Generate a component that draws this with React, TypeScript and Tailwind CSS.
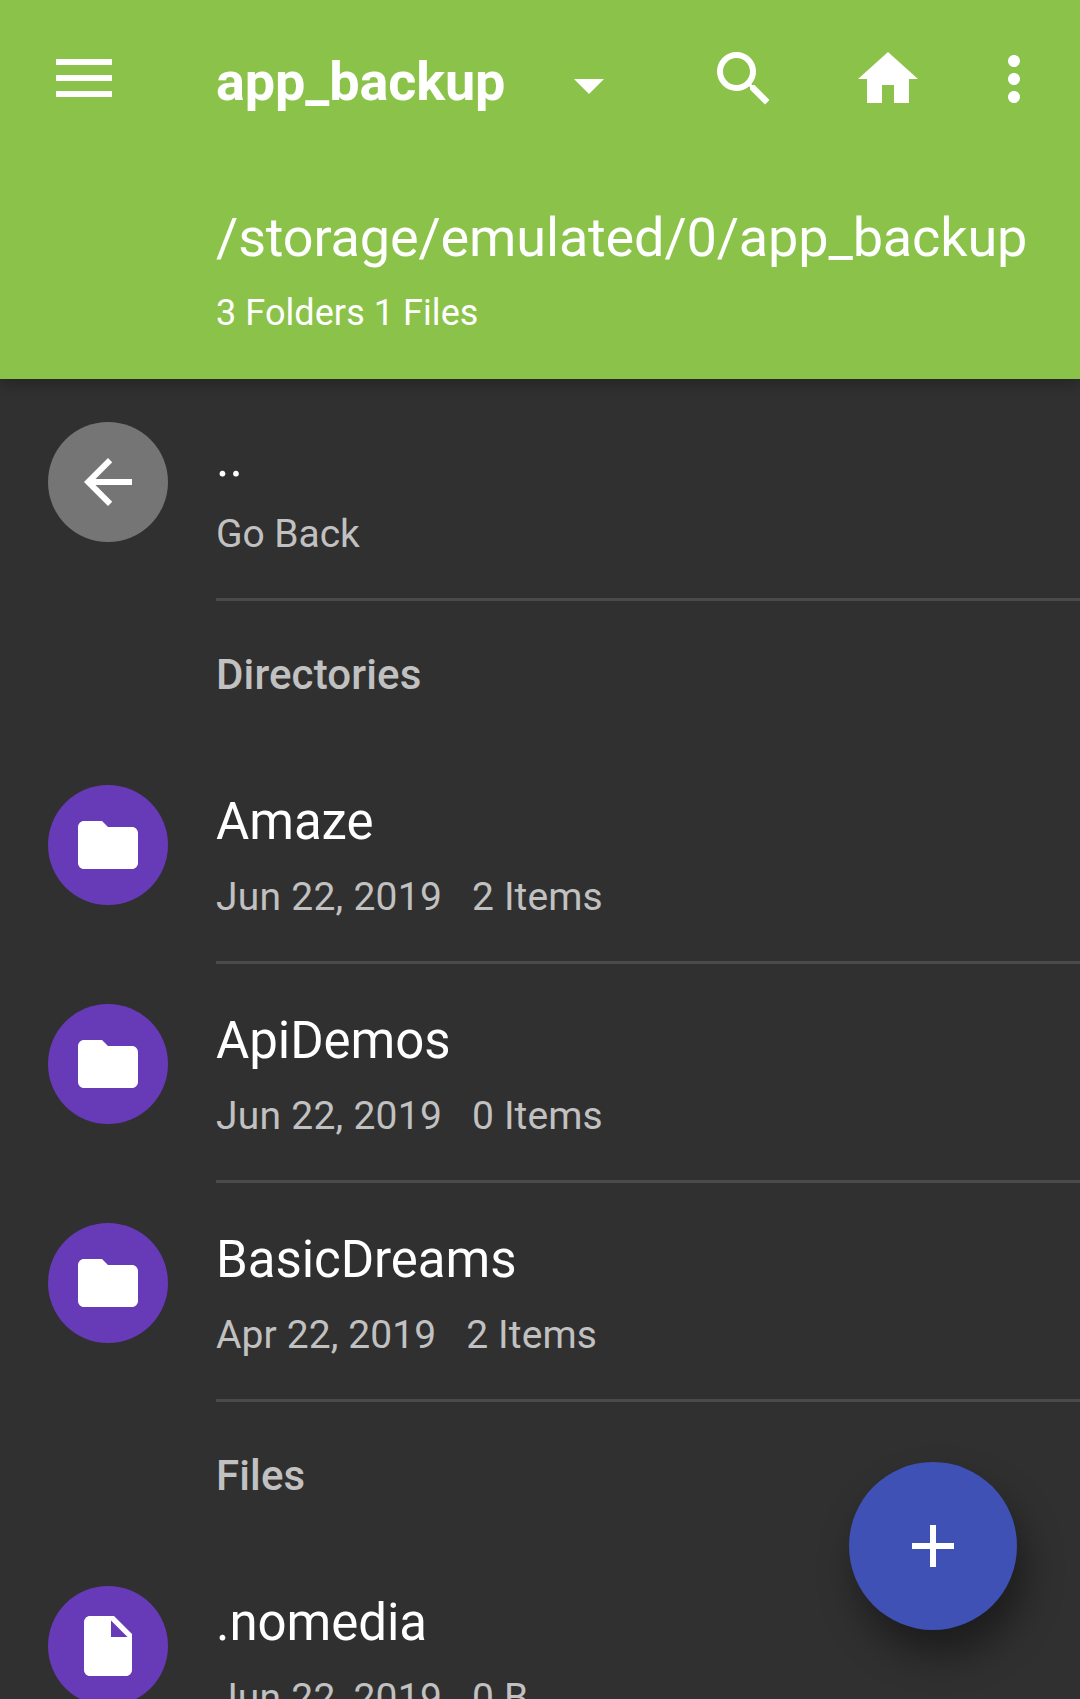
import React from "react";

const icons = {
  menu: "M2.67 18.33h18.66v-2H2.67v2zm0-5.33h18.66v-2H2.67v2zm0-7.33v2h18.66v-2H2.67z",
  search: "M15.5 14h-.79l-.28-.27A6.471 6.471 0 0 0 16 9.5 6.5 6.5 0 1 0 9.5 16c1.61 0 3.09-.59 4.23-1.57l.27.28v.79l5 4.99L20.49 19l-4.99-5zm-6 0C7.01 14 5 11.99 5 9.5S7.01 5 9.5 5 14 7.01 14 9.5 11.99 14 9.5 14z",
  home: "M10 20v-6h4v6h5v-8h3L12 3 2 12h3v8z",
  more: "M12 8c1.1 0 2-.9 2-2s-.9-2-2-2-2 .9-2 2 .9 2 2 2zm0 2c-1.1 0-2 .9-2 2s.9 2 2 2 2-.9 2-2-.9-2-2-2zm0 6c-1.1 0-2 .9-2 2s.9 2 2 2 2-.9 2-2-.9-2-2-2z",
  back: "M20 11H7.83l5.59-5.59L12 4l-8 8 8 8 1.41-1.41L7.83 13H20v-2z",
  folder: "M10 4H4c-1.1 0-1.99.9-1.99 2L2 18c0 1.1.9 2 2 2h16c1.1 0 2-.9 2-2V8c0-1.1-.9-2-2-2h-8l-2-2z",
  file: "M6 2c-1.1 0-1.99.9-1.99 2L4 20c0 1.1.89 2 1.99 2H18c1.1 0 2-.9 2-2V8l-6-6H6zm7 7V3.5L18.5 9H13z",
  plus: "M19 13h-6v6h-2v-6H5v-2h6V5h2v6h6v2z",
  down: "M7 10l5 5 5-5z",
};

function Icon({ name, className = "" }: { name: keyof typeof icons; className?: string }) {
  return (
    <svg viewBox="0 0 24 24" fill="currentColor" className={`shrink-0 ${className}`}>
      <path d={icons[name]} />
    </svg>
  );
}

function Row({ icon, title, date, count, dateClass = "tracking-[0.25px]" }: { icon: "back" | "folder" | "file"; title: string; date: string; count?: string; dateClass?: string }) {
  return (
    <div className="flex h-[219px] shrink-0">
      <div className="w-[216px] shrink-0 pt-[40px] pl-12">
        <div className={`flex size-[120px] items-center justify-center rounded-full ${icon === "back" ? "bg-[#757575]" : "bg-[#673ab7]"}`}>
          <Icon name={icon} className="size-[72px]" />
        </div>
      </div>
      <div className="flex-1 border-b-3 border-[#4a4a4a] pt-[47px] whitespace-nowrap">
        <div className="text-[51px] leading-[60px] tracking-[-0.05px]">{title}</div>
        <div className="mt-[22px] flex gap-[30px] text-[39px] leading-[46px] text-[#c1c1c1]">
          <span className={dateClass}>{date}</span>
          {count && <span className="tracking-[0.1px]">{count}</span>}
        </div>
      </div>
    </div>
  );
}

function Section({ children }: { children: React.ReactNode }) {
  return <h2 className="h-36 shrink-0 pt-[49px] pl-[216px] text-[42px] leading-[50px] font-medium tracking-[0.13px] text-[#c1c1c1]">{children}</h2>;
}

export default function App() {
  return (
    <div className="relative flex h-[1699px] w-[1080px] flex-col overflow-hidden bg-[#303030] font-[Roboto,sans-serif] text-white">
      <header className="h-[379px] shrink-0 bg-[#8bc34a] shadow-[0_6px_12px_rgba(0,0,0,0.2)]">
        <div className="flex h-[158px] items-center pl-12">
          <Icon name="menu" className="mb-[2px] size-[72px]" />
          <h1 className="mt-[6px] ml-24 w-[337px] text-[54px] leading-[64px] font-bold tracking-[-0.12px]">app_backup</h1>
          <Icon name="down" className="mt-[12px] size-[72px]" />
          <Icon name="search" className="ml-[83px] size-[72px]" />
          <Icon name="home" className="ml-[72px] size-[72px]" />
          <Icon name="more" className="ml-[54px] size-[72px]" />
        </div>
        <div className="pt-[48px] pl-[216px]">
          <div className="text-[54px] leading-[64px] tracking-[-0.15px]">/storage/emulated/0/app_backup</div>
          <div className="mt-[22px] text-[36px] leading-[43px] tracking-[0.07px]">3 Folders 1 Files</div>
        </div>
      </header>
      <main className="flex flex-col pt-[3px]">
        <Row icon="back" title=".." date="Go Back" dateClass="tracking-[-0.05px]" />
        <Section>Directories</Section>
        <Row icon="folder" title="Amaze" date="Jun 22, 2019" count="2 Items" />
        <Row icon="folder" title="ApiDemos" date="Jun 22, 2019" count="0 Items" />
        <Row icon="folder" title="BasicDreams" date="Apr 22, 2019" count="2 Items" dateClass="tracking-[0.1px]" />
        <Section>Files</Section>
        <Row icon="file" title=".nomedia" date="Jun 22, 2019" count="0 B" />
      </main>
      <button aria-label="Add" className="absolute top-[1462px] left-[849px] flex size-[168px] items-center justify-center rounded-full bg-[#3f51b5] shadow-[8px_24px_38px_rgba(0,0,0,0.42)]">
        <Icon name="plus" className="size-[72px]" />
      </button>
    </div>
  );
}
